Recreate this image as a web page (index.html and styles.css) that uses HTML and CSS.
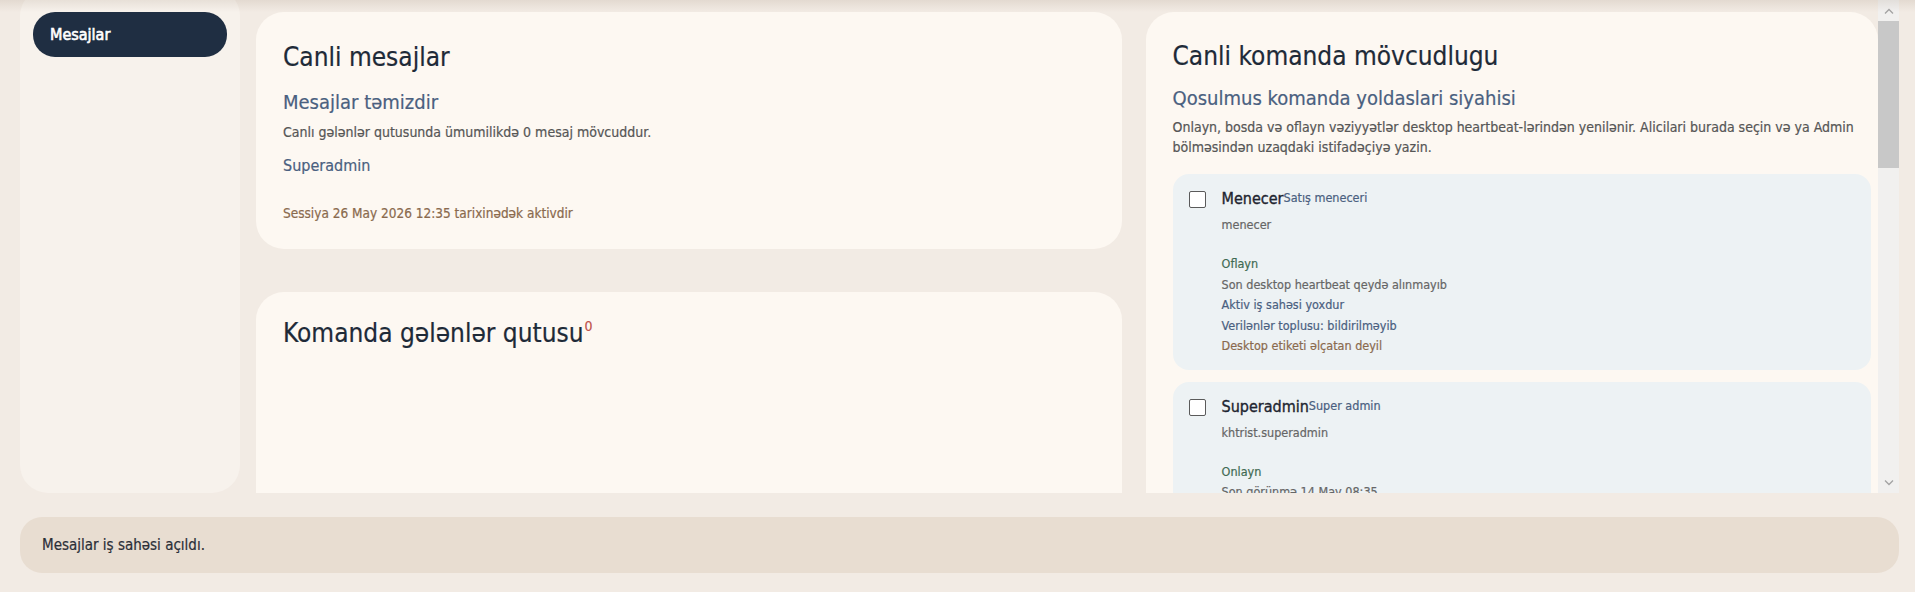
FILE: index.html
```html
<!DOCTYPE html>
<html lang="az">
<head>
    <meta charset="UTF-8">
    <meta name="viewport" content="width=device-width, initial-scale=1.0">
    <title>Mesajlar</title>
    <link rel="stylesheet" href="styles.css">
</head>

<body>

<div class="app">
  <div class="workspace">
    <aside class="sidebar">
      <button class="nav-item active">Mesajlar</button>
    </aside>

    <div class="viewport">
      <main class="content">
        <div class="column">
          <section class="card">
            <h2 class="card-title">Canli mesajlar</h2>
            <h3 class="card-subtitle">Mesajlar təmizdir</h3>
            <p class="card-text">Canlı gələnlər qutusunda ümumilikdə 0 mesaj mövcuddur.</p>
            <p class="user-name">Superadmin</p>
            <p class="session-note">Sessiya 26 May 2026 12:35 tarixinədək aktivdir</p>
          </section>

          <section class="card inbox-card">
            <h2 class="card-title">Komanda gələnlər qutusu<sup class="count">0</sup></h2>
          </section>
        </div>

        <div class="column">
          <section class="card team-card">
            <h2 class="card-title">Canli komanda mövcudlugu</h2>
            <h3 class="card-subtitle">Qosulmus komanda yoldaslari siyahisi</h3>
            <p class="card-text team-text">Onlayn, bosda və oflayn vəziyyətlər desktop heartbeat-lərindən yenilənir. Alicilari burada seçin və ya Admin bölməsindən uzaqdaki istifadəçiyə yazin.</p>

            <div class="member-list">
              <label class="member">
                <input type="checkbox" class="member-check">
                <div class="member-body">
                  <div class="member-name">Menecer<span class="member-role">Satış meneceri</span></div>
                  <div class="member-login">menecer</div>
                  <ul class="member-status">
                    <li class="state">Oflayn</li>
                    <li class="muted">Son desktop heartbeat qeydə alınmayıb</li>
                    <li class="info">Aktiv iş sahəsi yoxdur</li>
                    <li class="info">Verilənlər toplusu: bildirilməyib</li>
                    <li class="warn">Desktop etiketi əlçatan deyil</li>
                  </ul>
                </div>
              </label>

              <label class="member">
                <input type="checkbox" class="member-check">
                <div class="member-body">
                  <div class="member-name">Superadmin<span class="member-role">Super admin</span></div>
                  <div class="member-login">khtrist.superadmin</div>
                  <ul class="member-status">
                    <li class="state">Onlayn</li>
                    <li class="muted">Son görünmə 14 May 08:35</li>
                    <li class="info">Aktiv iş sahəsi: Mesajlar</li>
                    <li class="info">Verilənlər toplusu: bildirilməyib</li>
                    <li class="warn">Desktop etiketi əlçatan deyil</li>
                  </ul>
                </div>
              </label>
            </div>
          </section>
        </div>
      </main>

      <!-- scroll rail for the content area -->
      <div class="scroll-rail">
        <span class="rail-btn">
          <svg width="10" height="6" viewBox="0 0 10 6"><path d="M1 5.5L5 1.5L9 5.5" fill="none" stroke="#a3a3a3" stroke-width="1.3"/></svg>
        </span>
        <span class="rail-thumb"></span>
        <span class="rail-track"></span>
        <span class="rail-btn">
          <svg width="10" height="6" viewBox="0 0 10 6"><path d="M1 0.5L5 4.5L9 0.5" fill="none" stroke="#a3a3a3" stroke-width="1.3"/></svg>
        </span>
      </div>
    </div>

    <div class="top-shade"></div>
  </div>

  <footer class="status-bar">Mesajlar iş sahəsi açıldı.</footer>
</div>

</body>
</html>
```

FILE: styles.css
```css
* {
    box-sizing: border-box;
}

body {
    font-family: "Liberation Sans Narrow", "DejaVu Sans Condensed", "Roboto", sans-serif;
    background-color: #f2ebe4;
    color: #1e2a38;
    margin: 0;
    padding: 0;
    overflow: hidden;
    -webkit-text-stroke: 0.2px currentColor;
}

.app {
    height: 592px;
    display: flex;
    flex-direction: column;
    padding: 0 16px 19px 20px;
}

.workspace {
    position: relative;
    height: 493px;
    display: flex;
    gap: 16px;
}

/* soft shadow under the (off screen) header */
.top-shade {
    position: absolute;
    left: -20px;
    right: -16px;
    top: 0;
    height: 12px;
    background: linear-gradient(rgba(120, 95, 70, 0.12), rgba(120, 95, 70, 0));
    pointer-events: none;
}

.sidebar {
    flex: 0 0 220px;
    margin-top: -12px;
    padding: 24px 13px;
    background-color: #f7f2ec;
    border-radius: 28px;
}

.nav-item {
    display: block;
    width: 100%;
    height: 45px;
    padding: 0 17px;
    border: none;
    border-radius: 22px;
    font-family: inherit;
    font-size: 16px;
    font-weight: normal;
    text-align: left;
    color: #fff;
    background-color: #1f2e42;
    -webkit-text-stroke: 0.6px #fff;
    cursor: pointer;
}

.viewport {
    flex: 1;
    min-width: 0;
    display: flex;
}

.content {
    flex: 1;
    min-width: 0;
    overflow: hidden;
    display: grid;
    grid-template-columns: minmax(0, 865fr) minmax(0, 732fr);
    gap: 24px;
    padding-top: 12px;
    align-items: start;
}

.scroll-rail {
    flex: 0 0 21px;
    display: flex;
    flex-direction: column;
    background-color: #f1f0ef;
}

.rail-btn {
    height: 21px;
    display: flex;
    align-items: center;
    justify-content: center;
}

.rail-thumb {
    height: 147px;
    background-color: #c8c8c8;
}

.rail-track {
    flex: 1;
}

.column {
    display: flex;
    flex-direction: column;
    gap: 43px;
}

.card {
    background-color: #fdf8f2;
    border-radius: 28px;
    padding: 28px 27px 26px;
}

.card-title {
    margin: 0;
    font-size: 26px;
    font-weight: normal;
    line-height: 34px;
    color: #1e2a38;
}

.count {
    font-size: 14px;
    line-height: 0;
    vertical-align: top;
    position: relative;
    top: 10px;
    margin-left: 1px;
    color: #c0524a;
}

.card-subtitle {
    margin: 15px 0 0;
    font-size: 20px;
    font-weight: normal;
    line-height: 26px;
    color: #4a6080;
}

.card-text {
    margin: 7px 0 0;
    font-size: 14px;
    line-height: 20px;
    color: #565656;
}

.user-name {
    margin: 13px 0 0;
    font-size: 16px;
    line-height: 22px;
    color: #4a6080;
}

.session-note {
    margin: 26px 0 0;
    font-size: 13.5px;
    line-height: 20px;
    color: #8a6a4e;
}

.inbox-card {
    min-height: 640px;
    padding-top: 24px;
}

.team-card {
    min-height: 1490px;
    padding-top: 27px;
    padding-right: 7px;
}

.team-card .card-subtitle {
    margin-top: 12px;
}

.team-text {
    margin-top: 6px;
}

.member-list {
    margin-top: 17px;
    display: flex;
    flex-direction: column;
    gap: 12px;
}

.member {
    display: flex;
    gap: 16px;
    padding: 15px 16px 13px;
    background-color: #edf2f4;
    border-radius: 16px;
}

.member-check {
    appearance: none;
    flex: 0 0 17px;
    width: 17px;
    height: 17px;
    margin: 2px 0 0;
    border: 1px solid #5a5a5a;
    border-radius: 2px;
    background-color: #fff;
}

.member-name {
    font-size: 16px;
    line-height: 20px;
    color: #1e2530;
    -webkit-text-stroke: 0.35px currentColor;
}

.member-role {
    font-size: 12.5px;
    color: #4a6080;
    vertical-align: top;
    position: relative;
    top: -1px;
    -webkit-text-stroke: 0.2px currentColor;
}

.member-login {
    margin-top: 7px;
    font-size: 12.5px;
    line-height: 18px;
    color: #666;
}

.member-status {
    list-style: none;
    margin: 20px 0 0;
    padding: 0;
    font-size: 12.5px;
    line-height: 20.5px;
}

.member-status .state {
    color: #3f6a52;
}

.member-status .muted {
    color: #666;
}

.member-status .info {
    color: #4a6080;
}

.member-status .warn {
    color: #8a6a4e;
}

.status-bar {
    margin-top: 24px;
    height: 56px;
    display: flex;
    align-items: center;
    padding: 0 22px;
    background-color: #e8ddd1;
    border-radius: 22px;
    font-size: 15px;
    color: #2b2f38;
}
```
